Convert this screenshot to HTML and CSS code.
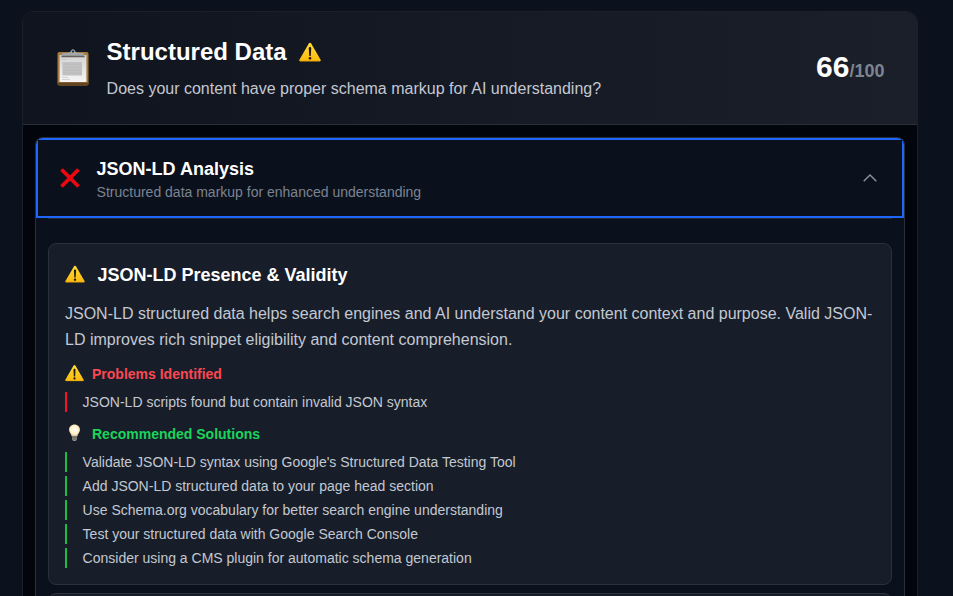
FILE: index.html
```html
<!DOCTYPE html>
<html lang="en">
<head>
    <meta charset="UTF-8">
    <meta name="viewport" content="width=device-width, initial-scale=1.0">
    <title>Structured Data</title>
    <link rel="stylesheet" href="styles.css">
</head>
<body>

    <!-- shared icons -->
    <svg class="icon-defs" width="0" height="0">
        <defs>
            <linearGradient id="warnFill" x1="0" y1="0" x2="0" y2="1">
                <stop offset="0" stop-color="#ffdc3c"/>
                <stop offset="1" stop-color="#fdb90c"/>
            </linearGradient>
            <linearGradient id="paperFill" x1="0" y1="0" x2="0" y2="1">
                <stop offset="0" stop-color="#d2d2d2"/>
                <stop offset="1" stop-color="#f6f6f6"/>
            </linearGradient>
            <radialGradient id="bulbFill" cx="0.5" cy="0.45" r="0.6">
                <stop offset="0" stop-color="#fffef4"/>
                <stop offset="0.6" stop-color="#fff3cd"/>
                <stop offset="1" stop-color="#d9b377"/>
            </radialGradient>
            <symbol id="warning" viewBox="0 0 22 20">
                <path d="M11 .8c.5 0 .9.3 1.2.8l9.4 16.2c.5.9 0 1.5-.8 1.5H1.2c-.8 0-1.3-.6-.8-1.5L9.8 1.6c.3-.5.7-.8 1.2-.8z" fill="url(#warnFill)"/>
                <path d="M1 19h20" stroke="#d99a10" stroke-width=".6"/>
                <path d="M9.800 6.200c0-1.500 2.400-1.500 2.400 0l-.4 7.200c-.1 1-1.500 1-1.600 0z" fill="#1f1a0a"/>
                <circle cx="11" cy="16.300" r="1.300" fill="#1f1a0a"/>
            </symbol>
        </defs>
    </svg>

    <div class="report-card">
        <div class="report-header">
            <svg class="clipboard" viewBox="0 0 32 37">
                <rect x=".5" y="3" width="31" height="33.500" rx="1.800" fill="#a87a3e"/>
                <path d="M.5 33.500h31v1.200a1.800 1.800 0 0 1-1.800 1.800H2.300a1.800 1.800 0 0 1-1.800-1.800z" fill="#634422"/>
                <rect x="2.600" y="6" width="26.800" height="27" fill="url(#paperFill)"/>
                <path d="M5 10.500h4.500M5 28.500h6M5 30.500h8" stroke="#c4c4c4" stroke-width=".7"/>
                <path d="M5.500 13h19.500v13.500H5.500z" fill="#c3c3c3"/>
                <path d="M5.500 15h19.500M5.500 18h19.500M5.500 21h19.500M5.500 24h19.500" stroke="#b7b7b7" stroke-width=".8"/>
                <path d="M4.500 6.200c0-1.500 1-2.200 2.500-2.200h4.500l2-1.500h5l2 1.500H25c1.500 0 2.500.7 2.500 2.200v1.500h-23z" fill="#a3a6a9"/>
                <path d="M4.500 6.700h23v1.500h-23z" fill="#695f5e"/>
                <circle cx="16" cy="2.500" r="1.700" fill="#252b35" stroke="#b4bcc4" stroke-width="1"/>
            </svg>
            <div class="report-info">
                <h2>Structured Data <svg class="warn-lg"><use href="#warning"/></svg></h2>
                <p>Does your content have proper schema markup for AI understanding?</p>
            </div>
            <div class="score">66<span>/100</span></div>
        </div>

        <div class="report-body">
            <div class="accordion">
                <button class="accordion-btn">
                    <svg class="cross" viewBox="0 0 20 20">
                        <path d="M1.500 1.500l17 17M18.500 1.500l-17 17" stroke="#ec0711" stroke-width="3.800"/>
                    </svg>
                    <span class="accordion-text">
                        <span class="accordion-title">JSON-LD Analysis</span>
                        <span class="accordion-sub">Structured data markup for enhanced understanding</span>
                    </span>
                    <svg class="chevron" viewBox="0 0 14 8">
                        <path d="M.7 7.300L7 1l6.300 6.300" fill="none" stroke="#8b93a1" stroke-width="1.400"/>
                    </svg>
                </button>

                <div class="accordion-content">
                    <div class="check-card">
                        <h3><svg class="warn-md"><use href="#warning"/></svg>JSON-LD Presence &amp; Validity</h3>
                        <p>JSON-LD structured data helps search engines and AI understand your content context and purpose. Valid JSON-LD improves rich snippet eligibility and content comprehension.</p>

                        <h4 class="problems-title"><svg class="warn-sm"><use href="#warning"/></svg>Problems Identified</h4>
                        <ul class="problems">
                            <li>JSON-LD scripts found but contain invalid JSON syntax</li>
                        </ul>

                        <h4 class="solutions-title">
                            <svg class="bulb" viewBox="0 0 19 18">
                                <path d="M9.500.5c3.200 0 5.500 2.300 5.500 5.300 0 2.700-2.200 3.900-2.600 6.400H6.600C6.200 9.700 4 8.500 4 5.800 4 2.800 6.300.5 9.500.5z" fill="url(#bulbFill)"/>
                                <path d="M7 12.200h5v3.300l-1.300 1.600H8.300L7 15.500z" fill="#8f8d89"/>
                                <path d="M7 13.600h5M7 15.200h5" stroke="#565454" stroke-width=".6"/>
                            </svg>Recommended Solutions
                        </h4>
                        <ul class="solutions">
                            <li>Validate JSON-LD syntax using Google's Structured Data Testing Tool</li>
                            <li>Add JSON-LD structured data to your page head section</li>
                            <li>Use Schema.org vocabulary for better search engine understanding</li>
                            <li>Test your structured data with Google Search Console</li>
                            <li>Consider using a CMS plugin for automatic schema generation</li>
                        </ul>
                    </div>
                    <div class="check-card"></div>
                </div>
            </div>
        </div>
    </div>

</body>
</html>
```
FILE: styles.css
```css
* {
    box-sizing: border-box;
    margin: 0;
    padding: 0;
}
body {
    height: 596px;
    overflow: hidden;
    padding: 11px 35px 0 22px;
    background-color: #0b121d;
    font-family: "Liberation Sans", Arial, sans-serif;
    color: #c3c8d2;
}
svg {
    flex-shrink: 0;
}
.icon-defs {
    position: absolute;
}
.report-card {
    height: 585px;
    background-color: #02050c;
    border: 1px solid #1a202b;
    border-bottom: none;
    border-radius: 12px 12px 0 0;
    overflow: hidden;
}
.report-header {
    display: flex;
    align-items: center;
    height: 113px;
    padding: 0 33px;
    background: linear-gradient(to right, #10141f, #1a1f2a);
    border-bottom: 1px solid #2a303c;
}
.clipboard {
    width: 34px;
    height: 37px;
    margin-right: 16.6px;
    margin-bottom: 2px;
}
.report-info {
    flex: 1;
    padding-top: 1px;
}
.report-info h2 {
    display: flex;
    align-items: center;
    font-size: 24px;
    line-height: 32px;
    color: white;
}
.warn-lg {
    width: 22px;
    height: 20px;
    margin-left: 12px;
}
.report-info p {
    margin-top: 9px;
    font-size: 16px;
    line-height: 24px;
}
.score {
    margin-bottom: 2px;
    margin-right: -0.5px;
    font-size: 30px;
    font-weight: bold;
    color: white;
}
.score span {
    font-size: 18px;
    color: #7d8593;
}
.report-body {
    padding: 12px;
}
.accordion {
    height: 459px;
    background-color: #0b111c;
    border: 1px solid #2a303b;
    border-bottom: none;
    border-radius: 8px 8px 0 0;
    overflow: hidden;
}
.accordion-btn {
    display: flex;
    align-items: center;
    width: 100%;
    height: 80px;
    padding: 0 25px 0 22px;
    background: none;
    border: 2px solid #1f66ff;
    font-family: inherit;
    text-align: left;
    cursor: pointer;
}
.cross {
    width: 20px;
    height: 20px;
    margin-right: 16.6px;
}
.accordion-text {
    flex: 1;
    padding-top: 2px;
}
.accordion-title {
    display: block;
    font-size: 18px;
    font-weight: bold;
    line-height: 26px;
    color: white;
}
.accordion-sub {
    display: block;
    font-size: 14px;
    line-height: 20px;
    color: #7b8392;
}
.chevron {
    width: 14px;
    height: 8px;
}
.accordion-content {
    margin: 0 12px;
    padding-top: 24px;
    border-top: 1px solid #232935;
}
.check-card {
    height: 342px;
    margin-bottom: 8px;
    padding: 16px;
    background-color: #181e29;
    border: 1px solid #2a303c;
    border-radius: 8px;
}
.check-card h3 {
    display: flex;
    align-items: center;
    padding-top: 1px;
    font-size: 18px;
    line-height: 28px;
    color: white;
}
.warn-md {
    width: 20px;
    height: 18px;
    margin-right: 12.4px;
    margin-bottom: 2px;
}
.check-card p {
    margin-top: 12px;
    font-size: 16px;
    line-height: 26px;
}
.check-card h4 {
    display: flex;
    align-items: center;
    height: 20px;
    font-size: 14px;
    line-height: 20px;
}
.check-card .problems-title {
    margin-top: 11px;
    color: #fb4853;
}
.check-card .solutions-title {
    margin-top: 12px;
    color: #1bd45b;
}
.warn-sm, .bulb {
    width: 19px;
    height: 18px;
    margin-right: 8px;
    margin-bottom: 2px;
}
.check-card ul {
    margin-top: 8px;
    list-style: none;
}
.check-card li {
    margin-bottom: 4px;
    padding-left: 15.6px;
    font-size: 14px;
    line-height: 20px;
}
.problems li {
    border-left: 2px solid #f5122a;
}
.solutions li {
    border-left: 2px solid #1bbf40;
}
```
